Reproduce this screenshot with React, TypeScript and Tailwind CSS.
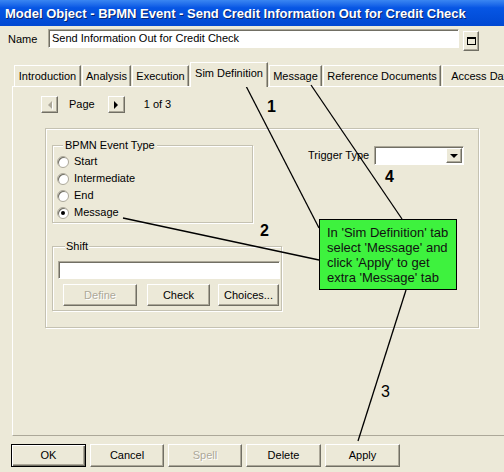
import React from 'react';

// raised 3d button face, classic windows look
const raised =
  'bg-[#ece9d8] border border-t-white border-l-white border-r-[#716f64] border-b-[#716f64] shadow-[inset_-1px_-1px_0_#aca899]';

// sunken white edit field
const sunken =
  'bg-white border border-t-[#aca899] border-l-[#aca899] border-r-white border-b-white shadow-[inset_1px_1px_0_#716f64]';

const disabledText = 'text-[#aca899] [text-shadow:1px_1px_0_#ffffff]';

type TabProps = {
    label: string,
    width: string,
    selected?: boolean
}

const Tab = ({ label, width, selected }: TabProps) => (
    <div
        className={`${width} shrink-0 flex items-center justify-center whitespace-nowrap overflow-hidden border-t border-l border-t-white border-l-white border-r border-r-[#716f64] shadow-[inset_-1px_0_0_#aca899] ${selected ? 'h-[25px] -mb-px bg-[#ece9d8] z-10 pb-[3px]' : 'h-[21px]'}`}
    >
        {label}
    </div>
);

type RadioProps = {
    label: string,
    checked?: boolean
}

const Radio = ({ label, checked }: RadioProps) => (
    <div className="h-[17px] flex items-center gap-[5px]">
        <div className="w-[12px] h-[12px] rounded-full bg-white border border-[#aca899] shadow-[inset_1px_1px_0_#716f64] flex items-center justify-center">
            {checked && <div className="w-[4px] h-[4px] rounded-full bg-black" />}
        </div>
        <span>{label}</span>
    </div>
);

const App = () => {
    return (
        <div className="relative w-[504px] h-[472px] overflow-hidden bg-[#ece9d8] text-black text-[11px] leading-[13px] font-['Liberation_Sans',Arial,sans-serif]">

            {/* title bar */}
            <div className="h-[26px] flex items-center pl-[5px] bg-linear-to-b from-[#3a86f2] via-[#0756e4] via-30% to-[#0048d2] text-white font-bold text-[13px] whitespace-nowrap [text-shadow:1px_1px_0_#0a246a]">
                Model Object - BPMN Event - Send Credit Information Out for Credit Check
            </div>

            {/* name row */}
            <div className="flex items-start pl-[8px] mt-[3px]">
                <span className="w-[40px] mt-[4px]">Name</span>
                <div className={`${sunken} w-[411px] h-[19px] pl-[3px] flex items-center`}>
                    Send Information Out for Credit Check
                </div>
                <button className={`${raised} ml-[4px] mt-[2px] w-[16px] h-[20px] flex items-center justify-center`}>
                    <div className="w-[9px] h-[8px] border border-black border-t-2" />
                </button>
            </div>

            {/* tab strip */}
            <div className="flex items-end h-[24px] mt-[11px] pl-[14px] gap-[1px]">
                <Tab label="Introduction" width="w-[67px]" />
                <Tab label="Analysis" width="w-[49px]" />
                <Tab label="Execution" width="w-[57px]" />
                <Tab label="Sim Definition" width="w-[78px]" selected />
                <Tab label="Message" width="w-[53px]" />
                <Tab label="Reference Documents" width="w-[118px]" />
                <Tab label="Access Data" width="w-[80px]" />
            </div>

            {/* tab panel */}
            <div className="ml-[12px] w-[520px] h-[350px] border-l border-t border-l-white border-t-white border-b border-b-[#aca899] pt-[9px]">

                {/* page navigation */}
                <div className="flex items-center pl-[28px]">
                    <button className={`${raised} w-[17px] h-[17px] flex items-center justify-center`}>
                        <div className="w-0 h-0 border-y-[4px] border-y-transparent border-r-[4px] border-r-[#aca899] drop-shadow-[1px_1px_0_#ffffff]" />
                    </button>
                    <span className="ml-[11px]">Page</span>
                    <button className={`${raised} ml-[13px] w-[17px] h-[17px] flex items-center justify-center`}>
                        <div className="w-0 h-0 border-y-[4px] border-y-transparent border-l-[4px] border-l-black" />
                    </button>
                    <span className="ml-[19px]">1 of 3</span>
                </div>

                {/* outer group */}
                <div className="ml-[32px] mt-[15px] w-[434px] h-[200px] border border-[#c5c2b2] shadow-[inset_1px_1px_0_#ffffff,1px_1px_0_#ffffff] flex">

                    <div className="ml-[6px] mt-[10px] flex flex-col">
                        {/* event type */}
                        <fieldset className="w-[201px] border border-[#c5c2b2] shadow-[inset_1px_1px_0_#ffffff,1px_1px_0_#ffffff] pl-[4px] pt-[1px] pb-[1px]">
                            <legend className="ml-[6px] px-[2px] bg-[#ece9d8]">BPMN Event Type</legend>
                            <Radio label="Start" />
                            <Radio label="Intermediate" />
                            <Radio label="End" />
                            <Radio label="Message" checked />
                        </fieldset>

                        {/* shift */}
                        <fieldset className="w-[230px] mt-[17px] border border-[#c5c2b2] shadow-[inset_1px_1px_0_#ffffff,1px_1px_0_#ffffff] pl-[5px] pr-[1px] pt-[8px] pb-[4px]">
                            <legend className="ml-[7px] px-[1px] bg-[#ece9d8]">Shift</legend>
                            <div className={`${sunken} h-[18px]`} />
                            <div className="flex mt-[5px] pl-[5px]">
                                <button className={`${raised} w-[74px] h-[22px] ${disabledText}`}>Define</button>
                                <button className={`${raised} ml-[10px] w-[63px] h-[22px]`}>Check</button>
                                <button className={`${raised} ml-[8px] w-[61px] h-[22px]`}>Choices...</button>
                            </div>
                        </fieldset>
                    </div>

                    {/* trigger type */}
                    <div className="ml-[26px] mt-[17px] flex items-start">
                        <span className="mt-[3px] whitespace-nowrap">Trigger Type</span>
                        <div className={`${sunken} ml-[5px] w-[90px] h-[19px] flex justify-end p-[1px]`}>
                            <div className={`${raised} w-[16px] h-full flex items-center justify-center`}>
                                <div className="w-0 h-0 border-x-[4px] border-x-transparent border-t-[4px] border-t-black" />
                            </div>
                        </div>
                    </div>
                </div>
            </div>

            {/* dialog buttons */}
            <div className="flex gap-[4px] pl-[11px] mt-[8px]">
                <button className="w-[75px] h-[23px] bg-[#ece9d8] border border-black shadow-[inset_1px_1px_0_#ffffff,inset_-1px_-1px_0_#716f64,inset_-2px_-2px_0_#aca899]">OK</button>
                <button className={`${raised} w-[74px] h-[23px]`}>Cancel</button>
                <button className={`${raised} w-[74px] h-[23px] ${disabledText}`}>Spell</button>
                <button className={`${raised} w-[75px] h-[23px]`}>Delete</button>
                <button className={`${raised} w-[75px] h-[23px]`}>Apply</button>
            </div>

            {/* annotation lines drawn over the dialog */}
            <svg className="absolute inset-0 pointer-events-none" width="504" height="472">
                <line x1="246" y1="86" x2="319" y2="228" stroke="black" strokeWidth="1.3" />
                <line x1="311" y1="85" x2="402" y2="219" stroke="black" strokeWidth="1.3" />
                <line x1="123" y1="218" x2="319" y2="260" stroke="black" strokeWidth="1.3" />
                <line x1="406" y1="290" x2="358" y2="441" stroke="black" strokeWidth="1.3" />
            </svg>

            {/* callout note */}
            <div className="absolute left-[319px] top-[219px] w-[138px] h-[71px] bg-[#3ef23e] border border-black text-[13px] leading-[15px] text-[#111] pl-[7px] pt-[5px]">
                In 'Sim Definition' tab<br />
                select 'Message' and<br />
                click 'Apply' to get<br />
                extra 'Message' tab
            </div>

            {/* step numbers */}
            <span className="absolute left-[267px] top-[97px] font-bold text-[16px] leading-[20px]">1</span>
            <span className="absolute left-[260px] top-[221px] font-bold text-[16px] leading-[20px]">2</span>
            <span className="absolute left-[381px] top-[382px] text-[16px] leading-[20px]">3</span>
            <span className="absolute left-[385px] top-[167px] font-bold text-[16px] leading-[20px]">4</span>
        </div>
    );
};

export default App;
